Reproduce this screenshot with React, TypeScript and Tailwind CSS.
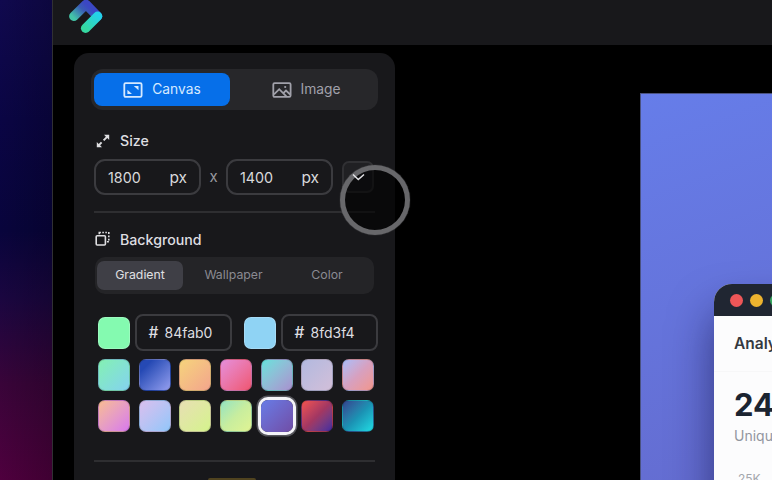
import React from "react";

const swatches: string[][] = [
  [
    "bg-linear-135 from-[#84f0b2] to-[#84d2ee]",
    "bg-linear-135 from-[#2549b4] from-20% to-[#959eef]",
    "bg-linear-135 from-[#f5d37b] to-[#f3a58c]",
    "bg-linear-135 from-[#e58edb] to-[#ef5571]",
    "bg-linear-135 from-[#63e2dc] to-[#a791cf]",
    "bg-linear-135 from-[#b2b9df] to-[#d2bfd9]",
    "bg-linear-135 from-[#a9bdfa] via-[#d7a0bf] to-[#f2968c]",
  ],
  [
    "bg-linear-135 from-[#f8bb91] to-[#d878ec]",
    "bg-linear-135 from-[#d9bfee] to-[#91c6fa]",
    "bg-linear-135 from-[#e7dfb3] to-[#d5f38c]",
    "bg-linear-135 from-[#93e3c0] via-[#c8ed9e] to-[#e0f493]",
    "bg-linear-135 from-[#667ce7] to-[#704da6]",
    "bg-linear-135 from-[#f4534d] via-[#a33762] to-[#4527a0]",
    "bg-linear-135 from-[#30448e] via-[#1b91b3] to-[#22dce3]",
  ],
];

function Logo() {
  return (
    <svg className="ml-4 -mt-[1px] h-[34px] w-[34px] shrink-0" viewBox="0 0 34 34" fill="none">
      <defs>
        <linearGradient id="left" x1="4" y1="18" x2="17" y2="5" gradientUnits="userSpaceOnUse">
          <stop stopColor="#43c5a8" />
          <stop offset=".65" stopColor="#3a5cb5" />
          <stop offset="1" stopColor="#3b47c3" />
        </linearGradient>
        <linearGradient id="right" x1="17" y1="30" x2="29" y2="17" gradientUnits="userSpaceOnUse">
          <stop stopColor="#35d8a1" />
          <stop offset="1" stopColor="#24d2e8" />
        </linearGradient>
      </defs>
      <path d="M4.8 17.3 17 5.4l11.6 11.8" stroke="url(#left)" strokeWidth="9.4" strokeLinecap="round" strokeLinejoin="round" />
      <path d="M28.6 17.2 16.6 29.2" stroke="url(#right)" strokeWidth="9.4" strokeLinecap="round" />
    </svg>
  );
}

function CanvasIcon() {
  return (
    <svg className="h-4 w-5" viewBox="0 0 20 16" fill="none" stroke="currentColor" strokeWidth="1.8">
      <rect x="1.3" y="1.1" width="17.3" height="13.8" rx="1.3" />
      <path d="M10.8 4h4.7v4.2zM9 12H4.4V7.8z" fill="currentColor" stroke="none" />
    </svg>
  );
}

function ImageIcon() {
  return (
    <svg className="h-4 w-5" viewBox="0 0 20 16" fill="none" stroke="currentColor" strokeWidth="1.8">
      <rect x="1.3" y="1.1" width="17.3" height="13.8" rx="1.3" />
      <path d="m2 12.4 5.2-5.2 7.2 7.2M11.3 11.2l2.7-2.7 4.2 4" />
      <circle cx="13.2" cy="5" r="1.1" fill="currentColor" stroke="none" />
    </svg>
  );
}

function ExpandIcon() {
  return (
    <svg className="h-[14px] w-[14px]" viewBox="0 0 14 14" fill="currentColor">
      <path d="M8 .8h5.2V6l-1.9-1.9-3 3-1.4-1.4 3-3zM6 13.2H.8V8l1.9 1.9 2.2-2.2 1.4 1.4-2.2 2.2z" />
    </svg>
  );
}

function LayersIcon() {
  return (
    <svg className="h-4 w-4" viewBox="0 0 16 16" fill="none" stroke="currentColor" strokeWidth="1.6">
      <rect x="1.2" y="4.8" width="9.2" height="9.2" rx="1" />
      <path d="M4.3 3.2V1.5h1.6M7.3 1.5h1.6M10.3 1.5h1.6M13.8 1.1v1.8M13.8 4.6v1.6M13.8 7.7v1.7M13.9 10.8h-2" />
    </svg>
  );
}

function SizeField({ value }: { value: string }) {
  return (
    <div className="flex h-9 w-[107px] items-center justify-between rounded-[11px] border-2 border-[#3b3b3f] px-3 pt-px text-[#d9d9dc]">
      <span className="text-[14.3px]">{value}</span>
      <span className="text-[15.5px]">px</span>
    </div>
  );
}

function HexField({ value, color }: { value: string; color: string }) {
  return (
    <div className="flex items-center">
      <div className={"h-8 w-8 rounded-[7px] border border-white/20 " + color} />
      <div className="ml-[4.5px] flex h-[37px] w-[97.5px] items-center rounded-[8px] border-2 border-[#3b3b3f] pl-3 text-[#dedee1]">
        <span className="w-4 text-[15.5px] font-medium">#</span>
        <span className="text-[14px]">{value}</span>
      </div>
    </div>
  );
}

function Sidebar() {
  return (
    <aside className="relative mt-[8px] ml-[21px] h-[427px] w-[321px] shrink-0 rounded-t-[15px] bg-[#18181b] pt-4 pl-[17px]">
      <div className="flex h-[41px] w-[287px] items-center rounded-[12px] bg-[#27272a] pl-[3px] text-[13.8px]">
        <div className="flex h-[33px] w-[136px] items-center justify-center gap-[9px] rounded-[8px] bg-[#066fe9] text-[#d5e9ff]">
          <CanvasIcon />
          <span>Canvas</span>
        </div>
        <div className="flex flex-1 items-center justify-center gap-2 pl-[5px] text-[#a1a1aa]">
          <ImageIcon />
          <span>Image</span>
        </div>
      </div>

      <div className="mt-[21px] ml-[5px] flex h-5 items-center gap-[10px] text-[14.2px] font-medium text-[#dedee1]">
        <ExpandIcon />
        <span>Size</span>
      </div>
      <div className="mt-[8px] ml-[3px] flex items-center">
        <SizeField value="1800" />
        <span className="w-[25px] pt-px text-center text-[15px] text-[#98989f]">x</span>
        <SizeField value="1400" />
        <div className="ml-[9px] flex h-8 w-8 items-center justify-center rounded-[7px] border-2 border-[#303033] bg-[#202023]" />
      </div>
      <div className="mt-4 ml-[3px] h-[2px] w-[281px] bg-[#2e2e31]" />

      <div className="mt-4 ml-[4px] flex h-5 items-center gap-[9px] text-[14.2px] font-medium text-[#dedee1]">
        <LayersIcon />
        <span className="pt-px">Background</span>
      </div>
      <div className="mt-[8px] ml-[4px] flex h-[37px] w-[279px] items-center rounded-[10px] bg-[#242427] pl-[2px] text-[12.3px] text-[#8a8a92]">
        <div className="flex h-[29px] w-[86px] items-center justify-center rounded-[7px] bg-[#3f3f46] text-[#e0e0e3]">Gradient</div>
        <div className="w-[101px] text-center">Wallpaper</div>
        <div className="flex-1 pr-[4px] text-center">Color</div>
      </div>
      <div className="mt-[20px] ml-[7px] flex gap-[12px]">
        <HexField value="84fab0" color="bg-[#84fab0]" />
        <HexField value="8fd3f4" color="bg-[#8fd3f4]" />
      </div>
      <div className="mt-[8px] ml-[7px] flex w-[276px] flex-col gap-[9px]">
        {swatches.map((row, r) => (
          <div key={r} className="flex justify-between">
            {row.map((fill, c) => (
              <div
                key={c}
                className={
                  (r === 1 && c === 4
                    ? "h-8 w-8 rounded-[7px] shadow-[0_0_0_3px_#f4f4f8,0_0_0_4.5px_#55555b] "
                    : "h-8 w-8 rounded-[7px] border border-black/15 ") + fill
                }
              />
            ))}
          </div>
        ))}
      </div>
      <div className="mt-[28px] ml-[3px] h-[2px] w-[281px] bg-[#2e2e31]" />
      <div className="mt-4 ml-[117px] h-[2px] w-[48px] rounded-t-sm bg-[#50431f]" />

      <div className="absolute top-[112px] left-[266px] h-[70px] w-[70px] rounded-full border-[5px] border-[#727276]/90 bg-black/60 shadow-[0_0_1px_#727276]" />
      <svg className="absolute top-[120px] left-[276.5px] h-2 w-4" viewBox="0 0 16 8" fill="none" stroke="#e4e4e7" strokeWidth="1.5">
        <path d="m2 1.5 5.3 5 5.7-5" />
      </svg>
    </aside>
  );
}

function Preview() {
  return (
    <section className="mt-[48px] ml-auto h-[387px] w-[132px] overflow-hidden border-t border-l border-[#4a5280] bg-linear-160 from-[#667de9] to-[#646cd0] pt-[190px] pl-[73px]">
      <div className="h-[600px] w-[400px] overflow-hidden rounded-[18px] bg-[#fcfcfd] shadow-[0_28px_44px_0_rgba(15,15,65,0.58)]">
        <div className="flex h-8 items-center gap-[7px] bg-[#202632] pl-4">
          <div className="h-[13px] w-[13px] rounded-full bg-[#ee5658]" />
          <div className="h-[13px] w-[13px] rounded-full bg-[#edb32f]" />
          <div className="h-[13px] w-[13px] rounded-full bg-[#38a861]" />
        </div>
        <div className="flex h-14 items-center border-b border-[#f7f7f8] pl-5 text-[15.5px] font-semibold text-[#343940]">Analytics</div>
        <div className="mt-[14px] pl-5 text-[31px] leading-[38px] font-bold text-[#1b2431]">24.7K</div>
        <div className="mt-[2px] pl-5 text-[14px] leading-5 text-[#92969f]">Unique Visitors</div>
        <div className="mt-[25px] pl-6 text-[12px] leading-4 text-[#a3a6ac]">25K</div>
      </div>
    </section>
  );
}

export default function App() {
  return (
    <div className="flex h-[480px] w-[772px] overflow-hidden bg-black font-['Inter',sans-serif]">
      <div className="w-[52px] shrink-0 bg-[linear-gradient(90deg,transparent,rgba(0,0,0,0.2)),linear-gradient(180deg,#10094e_0%,#0a0544_25%,#08043c_48%,#1a0640_62%,#390439_80%,#4f003e_100%)]" />
      <main className="flex min-w-0 flex-1 flex-col border-l border-[#303033]">
        <header className="flex h-[45px] shrink-0 items-start overflow-hidden bg-[#18181b]">
          <Logo />
        </header>
        <div className="flex flex-1 items-start">
          <Sidebar />
          <Preview />
        </div>
      </main>
    </div>
  );
}
